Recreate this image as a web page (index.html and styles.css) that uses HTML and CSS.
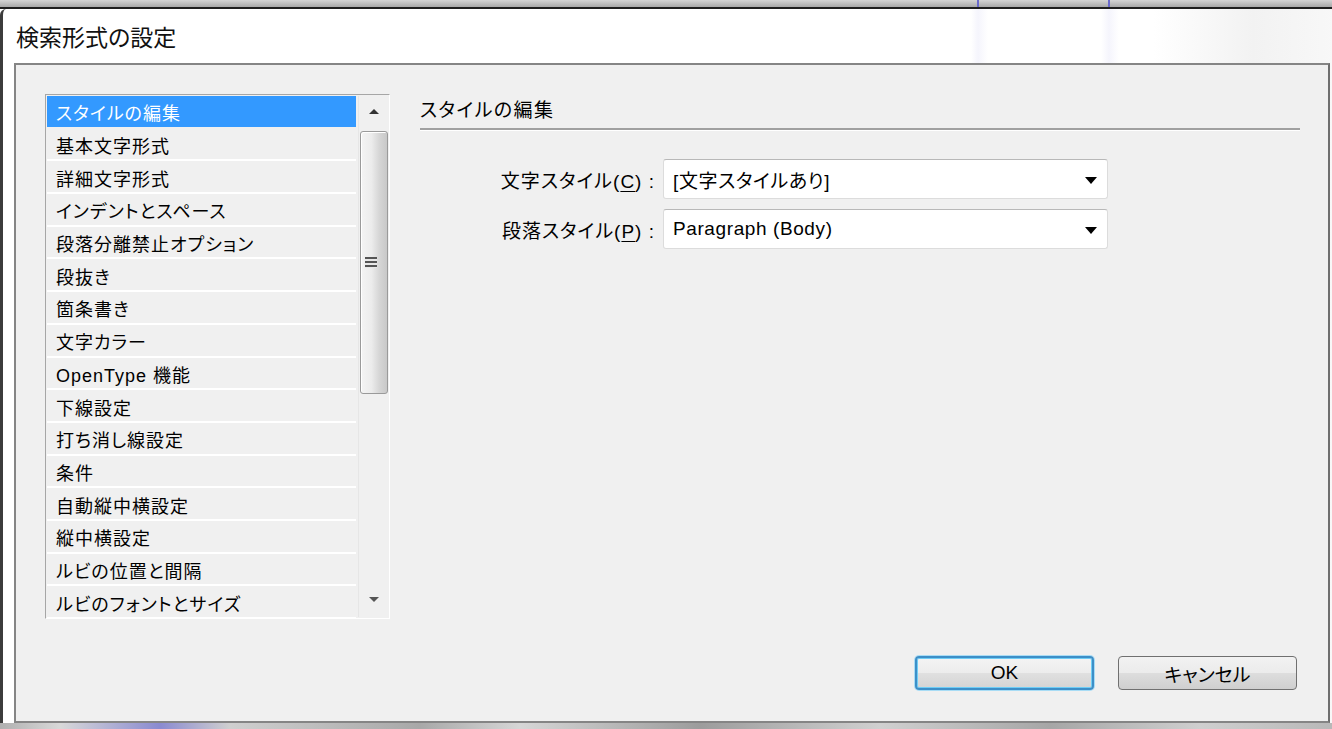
FILE: index.html
```html
<!DOCTYPE html>
<html lang="ja">
<head>
<meta charset="utf-8">
<title>検索形式の設定</title>
<link rel="stylesheet" href="styles.css">
</head>
<body>
<div class="screen">
  <div class="topstrip"></div>
  <div class="window">
    <div class="titlebar">検索形式の設定</div>
    <div class="panel">
      <div class="main">
        <div class="listbox">
          <ul class="items">
            <li class="item selected">スタイルの編集</li>
            <li class="item">基本文字形式</li>
            <li class="item">詳細文字形式</li>
            <li class="item">インデントとスペース</li>
            <li class="item">段落分離禁止オプション</li>
            <li class="item">段抜き</li>
            <li class="item">箇条書き</li>
            <li class="item">文字カラー</li>
            <li class="item">OpenType 機能</li>
            <li class="item">下線設定</li>
            <li class="item">打ち消し線設定</li>
            <li class="item">条件</li>
            <li class="item">自動縦中横設定</li>
            <li class="item">縦中横設定</li>
            <li class="item">ルビの位置と間隔</li>
            <li class="item">ルビのフォントとサイズ</li>
          </ul>
          <div class="scrollbar">
            <div class="arrow up"></div>
            <div class="thumb"><span class="grip"></span></div>
            <div class="track"></div>
            <div class="arrow down"></div>
          </div>
        </div>
        <div class="content">
          <div class="heading">スタイルの編集</div>
          <div class="form">
            <div class="row">
              <label class="label">文字スタイル(<u>C</u>) :</label>
              <div class="select"><span class="value">[文字スタイルあり]</span><span class="caret"></span></div>
            </div>
            <div class="row">
              <label class="label">段落スタイル(<u>P</u>) :</label>
              <div class="select"><span class="value">Paragraph (Body)</span><span class="caret"></span></div>
            </div>
          </div>
        </div>
      </div>
      <div class="buttons">
        <button class="btn primary">OK</button>
        <button class="btn">キャンセル</button>
      </div>
    </div>
  </div>
  <div class="bottomstrip"></div>
</div>
</body>
</html>
```

FILE: styles.css
```css
html, body {
  margin: 0;
  padding: 0;
  background: #ffffff;
}
body {
  width: 1332px;
  height: 729px;
  overflow: hidden;
  font-family: "Liberation Sans", "Noto Sans CJK JP", sans-serif;
  font-feature-settings: "palt";
  color: #000;
}
.screen {
  width: 1332px;
  height: 729px;
  display: flex;
  flex-direction: column;
  overflow: hidden;
}
.topstrip {
  height: 7px;
  flex: none;
  background:
    linear-gradient(90deg, transparent 977px, #6a6acc 977px, #6a6acc 979px, transparent 979px, transparent 1108px, #6a6acc 1108px, #6a6acc 1110px, transparent 1110px),
    linear-gradient(180deg, #d4d4d4, #a8a8a8);
  border-bottom: 2px solid #1e1e1e;
}
.window {
  flex: 1;
  display: flex;
  flex-direction: column;
  border-left: 3px solid #3c3c3c;
  border-top-left-radius: 6px;
  background:
    linear-gradient(90deg, transparent 968px, rgba(215,215,245,0.25) 975px, transparent 985px, transparent 1098px, rgba(215,215,245,0.25) 1106px, transparent 1116px),
    linear-gradient(90deg, #ffffff 0, #ffffff 1150px, #f2f2f2 1250px, #f8f8f8 1332px);
  padding-left: 11px;
  padding-right: 2px;
  min-height: 0;
}
.titlebar {
  height: 54px;
  flex: none;
  display: flex;
  align-items: center;
  padding-left: 2px;
  font-size: 23px;
  color: #111;
}
.panel {
  flex: 1;
  display: flex;
  flex-direction: column;
  background: #f0f0f0;
  border: 2px solid #858585;
  border-right-color: #6e6e6e;
  padding: 29px 31px 31px 29px;
  min-height: 0;
}
.main {
  flex: 1;
  display: flex;
  gap: 30px;
  min-height: 0;
}
.listbox {
  width: 345px;
  height: 525px;
  box-sizing: border-box;
  border: 1px solid #a6a6a6;
  border-right-color: #ffffff;
  border-bottom-color: #ffffff;
  padding: 1px;
  display: flex;
  gap: 2px;
  overflow: hidden;
  flex: none;
}
.items {
  list-style: none;
  margin: 0;
  padding: 0;
  width: 309px;
  flex: none;
}
.item {
  box-sizing: border-box;
  height: 32.7px;
  border-bottom: 2px solid #ffffff;
  display: flex;
  align-items: center;
  padding-left: 9px;
  padding-top: 2px;
  font-size: 18px;
  letter-spacing: 1px;
  white-space: nowrap;
}
.item.selected {
  background: #3399ff;
  color: #ffffff;
  border-bottom-color: #f0f0f0;
}
.scrollbar {
  width: 30px;
  flex: none;
  display: flex;
  flex-direction: column;
  background: #f0f0f0;
  border-left: 1px solid #e6e6e6;
  border-right: 1px solid #e6e6e6;
}
.arrow {
  height: 35px;
  flex: none;
  position: relative;
}
.arrow::after {
  content: "";
  position: absolute;
  left: 10px;
  width: 0;
  height: 0;
  border-left: 5px solid transparent;
  border-right: 5px solid transparent;
}
.arrow.up::after {
  top: 13px;
  border-bottom: 5px solid #333;
}
.arrow.down {
  margin-top: auto;
}
.arrow.down::after {
  top: 15px;
  border-top: 5px solid #555;
}
.thumb {
  height: 263px;
  flex: none;
  margin: 0 1px;
  box-sizing: border-box;
  border: 1px solid #9a9a9a;
  border-radius: 3px;
  background: linear-gradient(90deg, #f4f4f4 0%, #ececec 40%, #d6d6d6 70%, #c8c8c8 100%);
  box-shadow: inset 1px 1px 0 #ffffff;
  display: flex;
  align-items: center;
  justify-content: center;
}
.grip {
  width: 12px;
  height: 11px;
  margin-right: 6px;
  background: repeating-linear-gradient(180deg, #555 0, #555 2px, #e8e8e8 2px, #e8e8e8 4px);
}
.track {
  flex: 1;
}
.content {
  flex: 1;
  display: flex;
  flex-direction: column;
  padding-top: 4px;
}
.heading {
  font-size: 19px;
  letter-spacing: 1.4px;
  height: 30px;
  line-height: 26px;
  border-bottom: 2px solid #a0a0a0;
  box-shadow: 0 1px 0 #ffffff;
  width: 880px;
}
.form {
  display: flex;
  flex-direction: column;
  gap: 10px;
  margin-top: 29px;
}
.row {
  display: flex;
  align-items: center;
  gap: 8px;
}
.label {
  width: 235px;
  text-align: right;
  font-size: 19px;
  letter-spacing: 1px;
  white-space: nowrap;
}
.label u {
  text-underline-offset: 3px;
}
.select {
  width: 445px;
  height: 40px;
  box-sizing: border-box;
  background: #ffffff;
  border: 1px solid #dcdcdc;
  border-top-color: #b8b8b8;
  border-radius: 3px;
  display: flex;
  align-items: center;
  padding-left: 9px;
  padding-right: 10px;
  font-size: 19px;
}
.value {
  flex: 1;
  white-space: nowrap;
  letter-spacing: 0.6px;
}
.caret {
  width: 0;
  height: 0;
  border-left: 6px solid transparent;
  border-right: 6px solid transparent;
  border-top: 7px solid #000;
  margin-top: 2px;
}
.buttons {
  display: flex;
  justify-content: flex-end;
  gap: 24px;
  flex: none;
}
.btn {
  width: 179px;
  height: 34px;
  box-sizing: border-box;
  font-family: "Liberation Sans", "Noto Sans CJK JP", sans-serif;
  font-feature-settings: "palt";
  font-size: 19px;
  color: #000;
  border: 1px solid #707070;
  border-radius: 4px;
  background: linear-gradient(180deg, #f2f2f2 0%, #ebebeb 50%, #dddddd 51%, #cfcfcf 100%);
  padding: 0;
}
.btn.primary {
  border: 2px solid #3d8fc8;
  box-shadow: 0 0 0 1px #6fcdf5 inset, 0 0 0 1px #a8dcf5;
  background: linear-gradient(180deg, #f4f4f4 0%, #ececec 50%, #e0e0e0 51%, #d4d4d4 100%);
}
.bottomstrip {
  height: 6px;
  flex: none;
  background: linear-gradient(90deg, #b0b0b0 0, #d8d8d8 60px, #8a8ad0 160px, #cfcfcf 230px, #a8a8a8 420px, #d6d6d6 520px, #9c9c9c 700px, #d0d0d0 880px, #a6a6a6 1050px, #cfcfcf 1200px, #b8b8b8 1332px);
}
```
